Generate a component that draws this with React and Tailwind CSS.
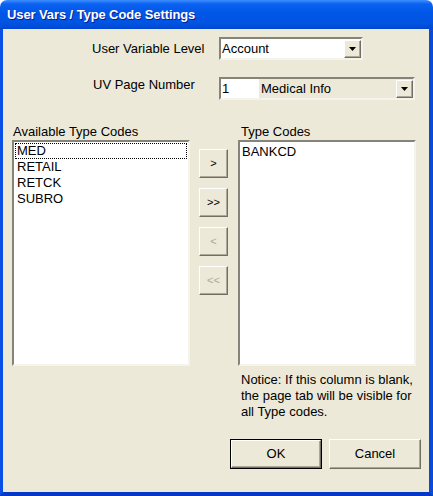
import React from "react";

const font = { fontFamily: '"Liberation Sans", Arial, sans-serif' };

const sunken =
  "border-2 border-t-[#868478] border-l-[#868478] border-r-[#F4F3EC] border-b-[#F4F3EC]";
const raised =
  "border border-t-white border-l-white border-r-[#716F64] border-b-[#716F64] shadow-[inset_-1px_-1px_0_#ACA899]";

const DropArrow = () => (
  <div
    className={`w-[17px] h-[18px] bg-[#ECE9D8] ${raised} flex items-center justify-center`}
  >
    <svg width="7" height="4" viewBox="0 0 7 4">
      <path d="M0 0h7L3.5 4z" fill="#000" />
    </svg>
  </div>
);

const MoveButton = ({ label, disabled }) => (
  <button
    className={`w-[29px] h-[29px] bg-[#ECE9D8] ${raised} text-[11px] leading-none flex items-center justify-center ${
      disabled ? "text-[#ACA899]" : "text-black"
    }`}
  >
    {label}
  </button>
);

const App = () => {
  return (
    <div className="w-[433px] h-[496px] bg-white flex flex-col text-[13px] text-black" style={font}>
      {/* Title bar */}
      <div className="h-[29px] rounded-t-[7px] bg-[linear-gradient(to_bottom,#3D8FFF_0%,#0B61F0_14%,#0056E6_45%,#0054E3_80%,#0046CF_100%)] flex items-center pl-[7px]">
        <span className="text-white font-bold text-[13px] [text-shadow:1px_1px_0_#0A1E8C] tracking-[-0.1px]">
          User Vars / Type Code Settings
        </span>
      </div>

      {/* Body */}
      <div className="flex-1 bg-[#ECE9D8] border-l-[3px] border-r-4 border-b-4 border-l-[#0A50E6] border-r-[#0A4AD8] border-b-[#0638C8] flex flex-col">
        {/* User Variable Level */}
        <div className="flex items-center pl-[89px] mt-[8px]">
          <span className="w-[127px]">User Variable Level</span>
          <div className={`w-[144px] h-[23px] bg-white ${sunken} flex items-center`}>
            <span className="flex-1 pl-[1px] leading-none">Account</span>
            <DropArrow />
          </div>
        </div>

        {/* UV Page Number */}
        <div className="flex items-start pl-[90px] mt-[17px]">
          <span className="w-[126px] -mt-[2px]">UV Page Number</span>
          <div className={`w-[196px] h-[23px] bg-[#ECE9D8] ${sunken} flex items-center`}>
            <span className="w-[38px] h-full bg-white pl-[1px] flex items-center">1</span>
            <span className="flex-1 pl-[2px]">Medical Info</span>
            <DropArrow />
          </div>
        </div>

        {/* Lists */}
        <div className="flex pl-[9px] mt-[22px]">
          <div className="flex flex-col">
            <span className="pl-[1px] h-[18px]">Available Type Codes</span>
            <div className={`w-[178px] h-[226px] bg-white ${sunken} pt-[1px] px-[1px]`}>
              <div className="border border-dotted border-black h-[16px] leading-[14px] pl-[1px]">MED</div>
              <div className="h-[16px] leading-[16px] pl-[2px]">RETAIL</div>
              <div className="h-[16px] leading-[16px] pl-[2px]">RETCK</div>
              <div className="h-[16px] leading-[16px] pl-[2px]">SUBRO</div>
            </div>
          </div>

          <div className="flex flex-col gap-[10px] pt-[27px] ml-[9px]">
            <MoveButton label=">" />
            <MoveButton label=">>" />
            <MoveButton label="<" disabled />
            <MoveButton label="<<" disabled />
          </div>

          <div className="flex flex-col ml-[10px]">
            <span className="pl-[3px] h-[18px]">Type Codes</span>
            <div className={`w-[178px] h-[226px] bg-white ${sunken} pt-[2px] pl-[2px]`}>
              <div className="h-[16px] leading-[16px]">BANKCD</div>
            </div>
            <p className="pl-[3px] pt-[6px] leading-[16px] w-[180px]">
              Notice: If this column is blank, the page tab will be visible for all Type codes.
            </p>
          </div>
        </div>

        {/* Buttons */}
        <div className="flex justify-end gap-[7px] pr-[8px] mt-auto mb-[23px]">
          <button className="w-[92px] h-[30px] border border-black">
            <div className={`h-full w-full bg-[#ECE9D8] ${raised} flex items-center justify-center`}>
              OK
            </div>
          </button>
          <button className={`w-[92px] h-[30px] bg-[#ECE9D8] ${raised} flex items-center justify-center`}>
            Cancel
          </button>
        </div>
      </div>
    </div>
  );
};

export default App;
